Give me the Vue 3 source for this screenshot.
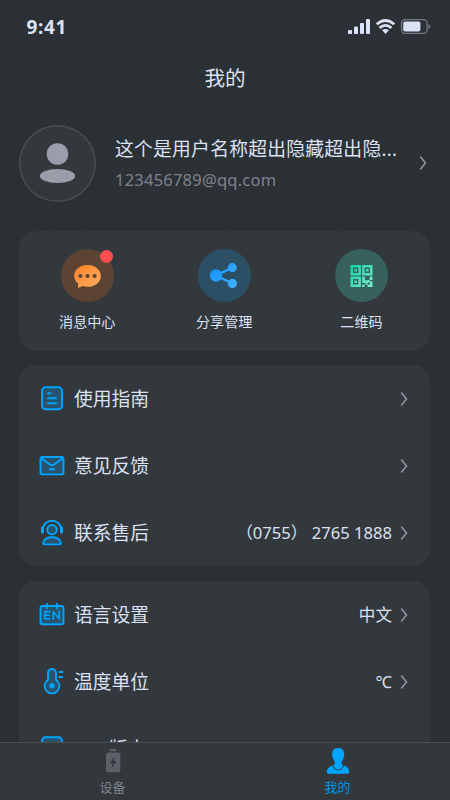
<script setup>
const guideRows = [
  { icon: 'guide', label: '使用指南', value: '' },
  { icon: 'mail', label: '意见反馈', value: '' },
  { icon: 'service', label: '联系售后', value: '（0755） 2765 1888' }
]
const settingRows = [
  { icon: 'language', label: '语言设置', value: '中文' },
  { icon: 'temperature', label: '温度单位', value: '℃' },
  { icon: 'guide', label: 'APP版本', value: '' }
]
const groups = [guideRows, settingRows]
</script>

<template>
  <div class="screen">
    <header class="status">
      <span class="time">9:41</span>
      <svg class="status-icons" width="84" height="18" viewBox="0 0 84 18">
        <g fill="#dce2f5">
          <rect x="1" y="12" width="4" height="4" rx="1" />
          <rect x="7" y="8.500" width="4" height="7.500" rx="1" />
          <rect x="13" y="5" width="4" height="11" rx="1" />
          <rect x="19" y="1" width="4" height="15" rx="1" />
          <path d="M35 12 Q38.500 9.800 42 12 L38.500 16 Z" />
        </g>
        <g fill="none" stroke="#dce2f5" stroke-width="2.800">
          <path d="M29.700 6.300 Q38.500 -1.400 47.300 6.300" />
          <path d="M32.600 9.900 Q38.500 4.900 44.400 9.900" />
        </g>
        <rect x="54.500" y="1.700" width="25.600" height="13.600" rx="3.500" fill="none" stroke="#747983" stroke-width="1.300" />
        <rect x="56.200" y="3.400" width="17.200" height="10.200" rx="1.800" fill="#dce2f5" />
        <path d="M81.500 6 Q83.300 6.500 83.300 8.500 T81.500 11 Z" fill="#747983" />
      </svg>
    </header>

    <h1 class="title">我的</h1>

    <section class="profile">
      <div class="avatar">
        <svg width="76" height="76" viewBox="0 0 76 76">
          <g fill="#9b9eaa">
            <circle cx="38.500" cy="29" r="10.800" />
            <ellipse cx="38.500" cy="51" rx="17.600" ry="7.100" />
          </g>
        </svg>
      </div>
      <div class="identity">
        <div class="name">这个是用户名称超出隐藏超出隐...</div>
        <div class="email">123456789@qq.com</div>
      </div>
      <svg class="chevron" width="8" height="16" viewBox="0 0 8 16"><path d="M1.200 1.500 6.500 8 1.200 14.500" /></svg>
    </section>

    <section class="card shortcuts">
      <div class="shortcut">
        <div class="disc orange">
          <svg width="53" height="53" viewBox="0 0 53 53">
            <defs>
              <linearGradient id="og" x1="0" y1="0" x2="1" y2="1">
                <stop offset="0" stop-color="#ff8020" /><stop offset="1" stop-color="#ffb16b" />
              </linearGradient>
            </defs>
            <path fill="url(#og)" d="M26.500 16c7.500 0 13.300 4.800 13.300 10.900S34 37.800 26.500 37.800c-1.800 0-3.500-.2-5-.7L17 39l.2-4.400c-2.500-2-4-4.700-4-7.700C13.200 20.800 19 16 26.500 16Z" />
            <g fill="#5c4332"><circle cx="19.400" cy="27" r="2.100" /><circle cx="26.500" cy="27" r="2.100" /><circle cx="33.600" cy="27" r="2.100" /></g>
          </svg>
          <i class="dot"></i>
        </div>
        <span>消息中心</span>
      </div>
      <div class="shortcut">
        <div class="disc blue">
          <svg width="53" height="53" viewBox="0 0 53 53">
            <defs>
              <linearGradient id="bg" gradientUnits="userSpaceOnUse" x1="13" y1="18" x2="40" y2="38">
                <stop offset="0" stop-color="#1692ff" /><stop offset="1" stop-color="#3eb2ff" />
              </linearGradient>
            </defs>
            <g fill="url(#bg)" stroke="url(#bg)">
              <path d="M34.300 18.600 18 26.500 34.300 34.400" fill="none" stroke-width="2.500" />
              <circle cx="18" cy="26.500" r="6.200" stroke="none" />
              <circle cx="34.300" cy="18.600" r="4.500" stroke="none" />
              <circle cx="34.300" cy="34.400" r="4.600" stroke="none" />
            </g>
          </svg>
        </div>
        <span>分享管理</span>
      </div>
      <div class="shortcut">
        <div class="disc green">
          <svg width="53" height="53" viewBox="0 0 53 53">
            <defs>
              <linearGradient id="gg" gradientUnits="userSpaceOnUse" x1="16" y1="16" x2="38" y2="38">
                <stop offset="0" stop-color="#12d1a4" /><stop offset="1" stop-color="#7beed4" />
              </linearGradient>
            </defs>
            <path fill="url(#gg)" fill-rule="evenodd" d="M15.500 16h10.400v10.400H15.500Zm2.500 2.500v5.400h5.400v-5.400ZM27.100 16h10.400v10.400H27.100Zm2.500 2.500v5.400h5.400v-5.400ZM15.500 27.600h10.400V38H15.500Zm2.500 2.500v5.400h5.400v-5.400Z" />
            <path fill="url(#gg)" d="M19.400 19.900h2.600v2.600h-2.600Zm11.600 0h2.600v2.600H31ZM19.400 31.500h2.600v2.600h-2.600ZM27.100 27.600h2.800v3.600h2.700v4.500h-2.200V34h-3.300ZM34.500 27.600h3V31h-3ZM27.100 35.500h2.500V38h-2.500ZM32.600 31h2.200v2.500h-2.200ZM34.800 32.300h2.700V38h-5v-2.500h2.300Z" />
          </svg>
        </div>
        <span>二维码</span>
      </div>
    </section>

    <section v-for="(group, index) in groups" :key="index" class="card list">
      <div v-for="row in group" :key="row.label" class="row">
        <svg class="row-icon" width="26" height="28" viewBox="0 0 26 28">
          <g v-if="row.icon === 'guide'">
            <rect class="tint" x="3" y="2.300" width="20" height="22" rx="3.500" />
            <path d="M9 8.300h2.500M9 13.300h8M9 18.300h8" />
          </g>
          <g v-else-if="row.icon === 'mail'">
            <rect class="tint" x="1.500" y="5" width="23" height="17.400" rx="2" />
            <path d="M2 6.200 11.200 12.700q1.800 1.200 3.600 0L24 6.200M10.800 17.200h4.400" />
          </g>
          <g v-else-if="row.icon === 'service'">
            <circle class="tint" cx="13" cy="10.700" r="4.700" />
            <path d="M4 10.700C4 5.200 8 1.800 13 1.800S22 5.200 22 10.700" />
            <path d="M3.500 8.500v4.500M22.500 8.500v4.500" class="ear" />
            <path class="tint" d="M5.800 25.400c-1.300 0-1.900-.9-1.600-2C5.200 20.200 8.100 18.200 13 18.200s7.800 2 8.800 5.200c.3 1.100-.3 2-1.600 2Z" />
          </g>
          <g v-else-if="row.icon === 'language'">
            <rect class="tint" x="1.500" y="5" width="23" height="18.300" rx="2" />
            <path d="M7.800 2.700v4.600M18 2.700v4.600" />
            <path class="letters" d="M10.800 10.600H5.700v7.200h5.100M5.700 14.200h4.700M14.300 18.300v-7.500l5.800 7v-7.700" />
          </g>
          <g v-else>
            <path class="tint" d="M9 12V5.300a4 4 0 0 1 8 0V12a7.400 7.400 0 1 1-8 0Z" transform="translate(0 -.3)" />
            <circle cx="13" cy="17.700" r="2.600" class="solid" />
            <path d="M20.300 4h3.300M20.300 9h2.900" />
          </g>
        </svg>
        <span class="label">{{ row.label }}</span>
        <span class="value">{{ row.value }}</span>
        <svg class="chevron" width="8" height="16" viewBox="0 0 8 16"><path d="M1.200 1.500 6.500 8 1.200 14.500" /></svg>
      </div>
    </section>

    <nav class="tabs">
      <div class="tab">
        <svg width="26" height="28" viewBox="0 0 26 28">
          <rect x="9.500" y="1" width="7" height="2.300" rx=".8" fill="#5c6168" />
          <rect x="6" y="4.500" width="14.300" height="19.700" rx="2" fill="#5c6168" />
          <path d="m14.800 8-5 7.200h2.700l-1 5.200 5-7.400h-2.900Z" fill="#33383c" />
        </svg>
        <span>设备</span>
      </div>
      <div class="tab active">
        <svg width="26" height="28" viewBox="0 0 26 28">
          <path fill="#00a5ff" d="M8 17.200h10.400c3.400 1.100 5.800 3.100 5.800 6.900 0 1.200-.6 1.600-1.700 1.600h-19c-1.100 0-1.700-.4-1.700-1.600 0-3.800 2.800-5.800 6.200-6.900Z" />
          <path fill="#33383c" d="M7.500 16h11.400v1.600c-.6 3-2.800 4.800-5.700 4.800s-5.100-1.800-5.700-4.800Z" />
          <path fill="#00a5ff" d="M13.200 0c3.800 0 6 2.300 5.900 5.800 0 1 .3 1.200.2 2.200-.1.900-.7 1-.9 1.900-.4 1.700-1 2.700-1.800 3.700v2.200l1.300 1.500c-.5 2.600-2.200 4.200-4.700 4.200s-4.200-1.600-4.700-4.200l1.300-1.500v-2.200c-.9-1-1.500-2-1.900-3.700C7.700 9 7.100 8.900 7 8c-.1-1 .3-1.300.2-2.200C7 2.300 9.400 0 13.200 0Z" />
        </svg>
        <span>我的</span>
      </div>
    </nav>
  </div>
</template>

<style>
body { margin: 0; background: #2b3034; overflow: hidden; }
</style>

<style scoped>
* { box-sizing: border-box; }
.screen {
  width: 450px;
  height: 800px;
  overflow: hidden;
  display: flex;
  flex-direction: column;
  position: relative;
  color: #dce1f3;
  font-family: "Noto Sans", "Noto Sans CJK SC", sans-serif;
  background-color: #2b3034;
  background-image:
    linear-gradient(90deg, rgba(33, 74, 98, .1) 1px, transparent 1px),
    linear-gradient(rgba(33, 74, 98, .1) 1px, transparent 1px),
    linear-gradient(90deg, rgba(47, 67, 78, .1) 1px, transparent 1px),
    linear-gradient(rgba(47, 67, 78, .1) 1px, transparent 1px);
  background-size: 36px 36px, 36px 36px, 7.200px 7.200px, 7.200px 7.200px;
  background-position: 14px 34px;
}
.status {
  height: 54px;
  flex: none;
  padding: 0 19px 0 26.500px;
  display: flex;
  align-items: center;
  justify-content: space-between;
}
.time { font-size: 19px; font-weight: 700; line-height: 20px; letter-spacing: .6px; }
.title {
  flex: none;
  margin: 0;
  height: 48px;
  line-height: 48px;
  text-align: center;
  font-size: 20.600px;
  font-weight: 400;
}
.profile {
  flex: none;
  height: 76px;
  margin: 23px 22px 0 19px;
  display: flex;
  align-items: center;
}
.avatar {
  width: 77px;
  height: 77px;
  flex: none;
  border-radius: 50%;
  background: #33383c;
  box-shadow: inset 0 0 0 1.500px #484d51;
}
.avatar svg { display: block; }
.identity { flex: 1; margin-left: 19px; padding-top: 2px; white-space: nowrap; }
.name { font-size: 18.800px; line-height: 32px; letter-spacing: .25px; }
.email { font-size: 16.500px; line-height: 30px; letter-spacing: .22px; color: #7d828d; }
.chevron { flex: none; fill: none; stroke: #8c909b; stroke-width: 1.700; }
.profile .chevron { margin-right: 1px; }
.card {
  flex: none;
  margin: 0 20px 0 19px;
  border-radius: 17px;
  background: #33383c;
}
.shortcuts {
  height: 120px;
  margin-top: 29.500px;
  padding-top: 18.900px;
  display: grid;
  grid-template-columns: 136.500px 137.400px 137.100px;
}
.shortcut { display: flex; flex-direction: column; align-items: center; }
.shortcut span { font-size: 14.100px; line-height: 20px; margin-top: 9.700px; }
.disc { width: 53px; height: 53px; border-radius: 50%; position: relative; }
.disc svg { display: block; }
.orange { background: #5c4332; }
.blue { background: #2b5066; }
.green { background: #37615c; }
.dot {
  position: absolute;
  top: 1px;
  right: 1px;
  width: 13px;
  height: 13px;
  border-radius: 50%;
  background: #ff4d4f;
}
.list { margin-top: 14.300px; padding: 0 22px 0 20px; }
.row { height: 67.200px; padding-top: 1.200px; display: flex; align-items: center; }
.row-icon { flex: none; fill: none; stroke: #00a5ff; stroke-width: 1.900; stroke-linecap: round; stroke-linejoin: round; }
.tint { fill: #27536c; }
.ear { stroke-width: 3; }
.letters { stroke-width: 1.600; }
.solid { fill: #00a5ff; stroke: none; }
.label { margin-left: 9px; font-size: 18.800px; line-height: 28px; }
.value { margin-left: auto; margin-right: 8px; font-size: 16.600px; line-height: 24px; white-space: pre; }
.tabs {
  position: absolute;
  left: 0;
  right: 0;
  bottom: 0;
  height: 58px;
  display: flex;
  border-top: 1px solid #484d51;
  background: #33383c;
}
.tab {
  flex: 1;
  display: flex;
  flex-direction: column;
  align-items: center;
  padding-top: 5px;
  color: #7d828d;
  font-size: 13px;
}
.tab span { line-height: 20px; margin-top: 1px; }
.tab svg { flex: none; }
.active { color: #0096e8; }
</style>
